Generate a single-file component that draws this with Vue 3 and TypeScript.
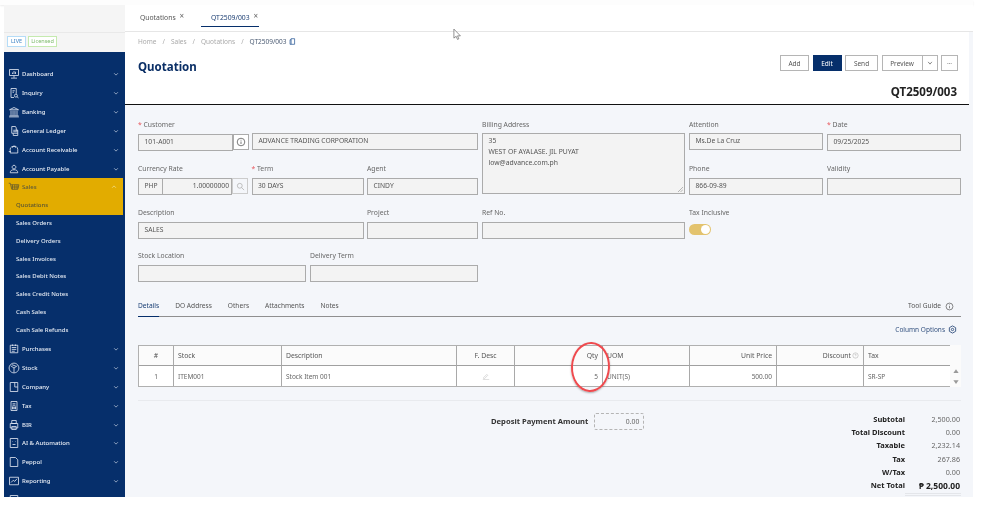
<script setup lang="ts">
interface NavItem { label: string; paths: string[] }
const navTop: NavItem[] = [
  { label: 'Dashboard', paths: ['M2 2h12v8H2z', 'M8 10v3M4 13.500h8', 'M6 8V6M8 8V4M10 8V5'] },
  { label: 'Inquiry', paths: ['M4 2h7v7M4 2v12h4', 'M6 5h3M6 7h2', 'M10.5 11.5m-2 0a2 2 0 1 0 4 0a2 2 0 1 0-4 0', 'M12 13l2 1.5'] },
  { label: 'Banking', paths: ['M2 5l6-3 6 3z', 'M4 6v6M6.700 6v6M9.300 6v6M12 6v6', 'M2 13h12M1.500 14.500h13'] },
  { label: 'General Ledger', paths: ['M5 2h5l1 2v3h2v7H7v-3H5z', 'M7 7h6M7 9h6M7 11h6'] },
  { label: 'Account Receivable', paths: ['M3 9a5 5 0 0 1 10-2v5H3z', 'M1 10h3M6 5a2 2 0 1 1 4 0'] },
  { label: 'Account Payable', paths: ['M8 3a2.5 2.5 0 1 1-.01 0z', 'M3 13c0-3 2-4 5-4s5 1 5 4z'] }
]
const navBottom: NavItem[] = [
  { label: 'Purchases', paths: ['M3 3h10v10H3z', 'M5 6h6M5 8.500h6M5 11h4', 'M6 2v2M10 2v2'] },
  { label: 'Stock', paths: ['M8 1.500a6.500 6.500 0 1 1-.01 0z', 'M3.500 5l4.500 3 4.500-3M8 8v6', 'M5 3.500l5.500 2'] },
  { label: 'Company', paths: ['M3 2h10v12H3z', 'M9 2v6h4'] },
  { label: 'Tax', paths: ['M4 2h8v12H4z', 'M6 5h4M6 7h4', 'M6 9h1v3H6zM9 9h1v3H9z'] },
  { label: 'BIR', paths: ['M5 2h6v4H5z', 'M3 6h10v6H3z', 'M5 10h6v4H5z'] },
  { label: 'AI & Automation', paths: ['M3 2h10v12H3z', 'M6 6h.5M9.500 6h.5', 'M6 10h4'] },
  { label: 'Peppol', paths: ['M3 2h7l3 3v9H3z'] },
  { label: 'Reporting', paths: ['M2 3h12v10H2z', 'M4 10l3-3 2 1.500 3-3.500'] }
]
const salesSub: string[] = ['Sales Orders', 'Delivery Orders', 'Sales Invoices', 'Sales Debit Notes', 'Sales Credit Notes', 'Cash Sales', 'Cash Sale Refunds']
const crumbs: string[] = ['Home', 'Sales', 'Quotations']
const detailTabs: string[] = ['Details', 'DO Address', 'Others', 'Attachments', 'Notes']
const totals: { label: string; value: string; strong?: boolean }[] = [
  { label: 'Subtotal', value: '2,500.00' },
  { label: 'Total Discount', value: '0.00' },
  { label: 'Taxable', value: '2,232.14' },
  { label: 'Tax', value: '267.86' },
  { label: 'W/Tax', value: '0.00' },
  { label: 'Net Total', value: '₱ 2,500.00', strong: true }
]
</script>

<template>
  <div class="screen">
    <div class="top-band"></div>
    <div class="frame">
      <aside class="sidebar">
        <div class="brand">
          <div class="badges">
            <span class="badge live">LIVE</span>
            <span class="badge licensed">Licensed</span>
          </div>
        </div>
        <nav class="nav">
          <div v-for="n in navTop" :key="n.label" class="nav-row">
            <svg class="nav-icon" viewBox="0 0 16 16"><path v-for="p in n.paths" :key="p" :d="p" /></svg>
            <span class="nav-label">{{ n.label }}</span>
            <svg class="chev" viewBox="0 0 8 8"><path d="M1.500 3l2.500 2.500L6.500 3" /></svg>
          </div>
          <div class="sales-open">
            <div class="nav-row active">
              <svg class="nav-icon" viewBox="0 0 16 16"><path d="M1 3h2l2 8h8l1.500-6H4M6 5v6M9 5v6M12 5v6M4.500 8h9.500" /></svg>
              <span class="nav-label">Sales</span>
              <svg class="chev" viewBox="0 0 8 8"><path d="M1.500 5l2.500-2.500L6.500 5" /></svg>
            </div>
            <div class="sub-row current">Quotations</div>
          </div>
          <div v-for="s in salesSub" :key="s" class="sub-row">{{ s }}</div>
          <div v-for="n in navBottom" :key="n.label" class="nav-row">
            <svg class="nav-icon" viewBox="0 0 16 16"><path v-for="p in n.paths" :key="p" :d="p" /></svg>
            <span class="nav-label">{{ n.label }}</span>
            <svg class="chev" viewBox="0 0 8 8"><path d="M1.500 3l2.500 2.500L6.500 3" /></svg>
          </div>
          <div class="nav-row">
            <svg class="nav-icon" viewBox="0 0 16 16"><path d="M3 2h10v12H3z" /></svg>
          </div>
        </nav>
      </aside>

      <main class="main">
        <div class="tabbar">
          <div class="tab first">Quotations <span class="x">×</span></div>
          <div class="tab on">QT2509/003 <span class="x">×</span></div>
        </div>
        <header class="head">
          <div class="crumbs">
            <template v-for="c in crumbs" :key="c"><span>{{ c }}</span><i>/</i></template>
            <b>QT2509/003</b>
            <svg class="copy" viewBox="0 0 10 10"><path d="M3 1h5v8H3zM3 2.500H1.500V9H3" /></svg>
          </div>
          <div class="title-row">
            <h1>Quotation</h1>
            <div class="actions">
              <button class="btn w-add">Add</button>
              <button class="btn primary w-edit">Edit</button>
              <button class="btn w-send">Send</button>
              <div class="split">
                <button class="btn w-prev">Preview</button>
                <button class="btn w-drop">
                  <svg viewBox="0 0 8 8"><path d="M1.500 2.500l2.500 3 2.500-3" /></svg>
                </button>
              </div>
              <button class="btn w-more">···</button>
            </div>
          </div>
          <div class="doc-no">QT2509/003</div>
        </header>

        <section class="body">
          <div class="form">
            <div class="col-left">
              <div class="f">
                <label><em>*</em> Customer</label>
                <div class="cust">
                  <div class="inp c-code">101-A001</div>
                  <div class="icon-btn">
                    <svg viewBox="0 0 10 10"><circle cx="5" cy="5" r="3.800" /><path d="M5 4.500v2.500M5 2.800v.8" /></svg>
                  </div>
                  <div class="inp grow raised">ADVANCE TRADING CORPORATION</div>
                </div>
              </div>
              <div class="trio">
                <div class="f">
                  <label>Currency Rate</label>
                  <div class="cur">
                    <div class="inp cur-code">PHP</div>
                    <div class="inp grow right">1.00000000</div>
                    <div class="search">
                      <svg viewBox="0 0 10 10"><circle cx="4.200" cy="4.200" r="2.700" /><path d="M6.200 6.200L9 9" /></svg>
                    </div>
                  </div>
                </div>
                <div class="f"><label><em>*</em> Term</label><div class="inp">30 DAYS</div></div>
                <div class="f"><label>Agent</label><div class="inp">CINDY</div></div>
              </div>
              <div class="duo-a">
                <div class="f"><label>Description</label><div class="inp">SALES</div></div>
                <div class="f"><label>Project</label><div class="inp"></div></div>
              </div>
              <div class="duo-b">
                <div class="f"><label>Stock Location</label><div class="inp"></div></div>
                <div class="f"><label>Delivery Term</label><div class="inp"></div></div>
              </div>
            </div>
            <div class="col-mid">
              <div class="f">
                <label>Billing Address</label>
                <div class="inp area">
                  <div>35</div>
                  <div>WEST OF AYALASE. JIL PUYAT</div>
                  <div>low@advance.com.ph</div>
                  <svg class="grip" viewBox="0 0 6 6"><path d="M0 6l6-6M3 6l3-3" /></svg>
                </div>
              </div>
              <div class="f"><label>Ref No.</label><div class="inp"></div></div>
            </div>
            <div class="col-right">
              <div class="pair">
                <div class="f"><label>Attention</label><div class="inp raised">Ms.De La Cruz</div></div>
                <div class="f"><label><em>*</em> Date</label><div class="inp">09/25/2025</div></div>
              </div>
              <div class="pair">
                <div class="f"><label>Phone</label><div class="inp">866-09-89</div></div>
                <div class="f"><label>Validity</label><div class="inp"></div></div>
              </div>
              <div class="f">
                <label>Tax Inclusive</label>
                <div class="switch"><span class="knob"></span></div>
              </div>
            </div>
          </div>

          <div class="tabs2">
            <span v-for="(t, i) in detailTabs" :key="t" class="t2" :class="{ on: i === 0 }">{{ t }}</span>
            <span class="guide">
              Tool Guide
              <svg viewBox="0 0 10 10"><circle cx="5" cy="5" r="3.800" /><path d="M5 4.500v2.500M5 2.800v.8" /></svg>
            </span>
          </div>
          <div class="col-opts">
            Column Options
            <svg viewBox="0 0 10 10"><path d="M5 1l3.500 2v4L5 9 1.500 7V3z" /><circle cx="5" cy="5" r="1.300" /></svg>
          </div>

          <div class="table-wrap">
            <div class="grid-t">
              <div class="th ctr">#</div>
              <div class="th">Stock</div>
              <div class="th">Description</div>
              <div class="th ctr">F. Desc</div>
              <div class="th rgt">Qty</div>
              <div class="th">UOM</div>
              <div class="th rgt">Unit Price</div>
              <div class="th rgt">Discount<svg class="q" viewBox="0 0 10 10"><circle cx="5" cy="5" r="3.800" /><path d="M4 4a1 1 0 1 1 1.500 1L5 5.800M5 7v.4" /></svg></div>
              <div class="th last">Tax</div>
              <div class="td ctr">1</div>
              <div class="td">ITEM001</div>
              <div class="td">Stock Item 001</div>
              <div class="td ctr">
                <svg class="pen" viewBox="0 0 10 10"><path d="M2 7l4-4 1.200 1.200-4 4H2zM1 9.500h8" /></svg>
              </div>
              <div class="td rgt">5</div>
              <div class="td">UNIT(S)</div>
              <div class="td rgt">500.00</div>
              <div class="td"></div>
              <div class="td last">SR-SP</div>
            </div>
            <div class="scroller">
              <svg viewBox="0 0 8 8"><path d="M4 1.500L7.500 6.500h-7z" /></svg>
              <svg viewBox="0 0 8 8"><path d="M4 6.500L.5 1.500h7z" /></svg>
            </div>
            <div class="ring"></div>
          </div>

          <div class="foot">
            <div class="deposit">
              <span>Deposit Payment Amount</span>
              <div class="dep-box">0.00</div>
            </div>
            <div class="totals">
              <div v-for="r in totals" :key="r.label" class="tot" :class="{ strong: r.strong }">
                <b>{{ r.label }}</b><span>{{ r.value }}</span>
              </div>
              <div class="tot-rule"></div>
            </div>
          </div>
        </section>
        <svg class="cursor" viewBox="0 0 10 14"><path d="M1 1v10l2.500-2 1.500 3.500 1.500-.7L5 8.500h3.200z" /></svg>
      </main>
    </div>
  </div>
</template>

<style>
html, body { margin: 0; background: #fff; }
</style>

<style scoped>
* { box-sizing: border-box; }
.screen {
  width: 981px; height: 519px; overflow: hidden; background: #fff;
  font-family: "Noto Sans", "Open Sans", sans-serif; font-size: 7px; color: #555;
  display: flex; flex-direction: column;
  filter: blur(.3px);
}
.top-band { height: 5px; flex: none; background: #fdfdfd; box-shadow: 0 1px 2px rgba(0,0,0,.08); margin-right: 8px; }
.frame { height: 492px; display: flex; padding-left: 4px; padding-right: 8px; flex: none; }

.sidebar { width: 121px; flex: none; display: flex; flex-direction: column; overflow: hidden; }
.brand { height: 47px; flex: none; background: #f5f5f5; padding-top: 31px; position: relative; }
.brand::before { content: ""; position: absolute; left: 0; right: 0; top: 27px; height: 1px; background: #e9e9e9; }
.badges { display: flex; gap: 2px; padding-left: 3px; }
.badge { font-size: 5.500px; height: 11px; line-height: 9px; text-align: center; border: 1px solid; background: #fff; }
.live { width: 19px; color: #3b82c4; border-color: #b5dcf7; }
.licensed { width: 29px; color: #7cb96a; border-color: #c5eaaf; }
.nav { flex: 1; background: #062f6b; padding-top: 13px; color: #e9eef6; overflow: hidden; }
.nav-row { height: 18.850px; display: flex; align-items: center; padding-left: 3.500px; padding-right: 4px; font-size: 6px; font-weight: 500; }
.nav-icon { width: 12px; height: 12px; flex: none; margin-right: 2.500px; fill: none; stroke: #dfe6f0; stroke-width: 1.100; }
.nav-label { flex: 1; white-space: nowrap; }
.chev { width: 6px; height: 6px; fill: none; stroke: #b8c6da; stroke-width: 1; margin-right: 2px; margin-left: auto; }
.sales-open { width: 119px; background: #e2ac00; }
.sales-open .nav-row { color: #5e5a3a; }
.sales-open .nav-icon { stroke: #6b5f2a; }
.sales-open .chev { stroke: #f2dd90; }
.sub-row { height: 17.850px; line-height: 17.850px; padding-left: 12px; font-size: 6px; font-weight: 500; color: #e4eaf3; white-space: nowrap; }
.sub-row.current { color: #5b5530; height: 18px; }

.main { flex: 1; min-width: 0; display: flex; flex-direction: column; position: relative; background: #f4f6fa; }
.tabbar { height: 27px; flex: none; background: #fff; border-bottom: 1px solid #e6e6e6; display: flex; padding-left: 13px; gap: 18px; }
.tab { font-size: 6.800px; color: #555; padding: 6px 0 0 2px; height: 22px; white-space: nowrap; }
.tab.first { width: 45px; }
.tab.on { width: 58px; color: #1d3f73; border-bottom: 1px solid #062f6b; padding-left: 10px; }
.x { font-size: 8px; margin-left: 2px; position: relative; top: -1px; color: #666; }

.head { height: 73px; flex: none; background: #fff; border-bottom: 1px solid #111; padding: 0 11px 0 13px; margin-right: 4px; position: relative; }
.crumbs { padding-top: 4px; height: 14px; display: flex; align-items: center; font-size: 6.500px; color: #aaa; white-space: nowrap; }
.crumbs i { font-style: normal; margin: 0 6px; }
.crumbs b { font-weight: 400; color: #4a5a72; }
.copy { width: 7px; height: 7px; margin-left: 2px; fill: none; stroke: #1d4f91; stroke-width: 1; }
.title-row { display: flex; justify-content: space-between; align-items: flex-start; padding-top: 9px; }
h1 { margin: 0; font-size: 11.500px; line-height: 16px; font-weight: 700; color: #0b2f66; position: relative; top: 4px; }
.actions { display: flex; gap: 3.500px; }
.btn { height: 16px; padding: 0; background: #fff; border: 1px solid #b5b5b5; font: inherit; font-size: 6.500px; color: #555; display: flex; align-items: center; justify-content: center; }
.btn.primary { background: #062f6b; color: #fff; border-color: #062f6b; }
.btn svg { width: 6px; height: 6px; fill: none; stroke: #666; }
.w-add, .w-edit { width: 29px; }
.w-send { width: 33px; }
.split { display: flex; }
.w-prev { width: 41px; }
.w-drop { width: 16px; margin-left: -1px; }
.w-more { width: 17px; color: #888; }
.doc-no { position: absolute; right: 12px; top: 53px; font-size: 11.500px; line-height: 14px; font-weight: 700; color: #222; }

.body { flex: 1; min-height: 0; background: #f4f6fa; padding: 14px 12px 0 13px; position: relative; }
.form { display: flex; gap: 4px; height: 177px; }
.f { display: flex; flex-direction: column; min-width: 0; }
label { height: 15px; font-size: 6.800px; line-height: 12px; color: #666; white-space: nowrap; }
label em { color: #e8545a; font-style: normal; }
.inp { height: 17px; background: #f3f3f3; border: 1px solid #ababab; font-size: 6.700px; line-height: 14px; padding: 0 5.500px; color: #555; white-space: nowrap; overflow: hidden; }
.raised { position: relative; top: -1px; }
.col-left { width: 340px; flex: none; display: flex; flex-direction: column; gap: 12px; }
.cust, .cur { display: flex; }
.c-code { width: 95px; flex: none; }
.icon-btn { width: 16px; height: 16px; flex: none; border: 1px solid #ababab; background: #fff; display: flex; align-items: center; justify-content: center; margin-right: 3px; }
.icon-btn svg { width: 10px; height: 10px; fill: none; stroke: #444; stroke-width: .7; }
.grow { flex: 1; min-width: 0; }
.right { text-align: right; padding-right: 2px; border-left: 0; }
.cur-code { width: 25px; flex: none; }
.search { width: 16px; height: 16px; flex: none; border: 1px solid #ccc; display: flex; align-items: center; justify-content: center; }
.search svg { width: 9px; height: 9px; fill: none; stroke: #aaa; stroke-width: .8; }
.trio { display: grid; grid-template-columns: 110px 112px 111px; column-gap: 3.500px; }
.duo-a { display: grid; grid-template-columns: 226px 111px; column-gap: 3px; }
.duo-b { display: grid; grid-template-columns: 168px 168px; column-gap: 4px; margin-top: -1px; }
.col-mid { width: 203px; flex: none; display: flex; flex-direction: column; gap: 12px; }
.area { height: 61px; margin-top: -1px; padding: 1px 5.500px 0; line-height: 11px; position: relative; white-space: normal; font-size: 6.800px; }
.col-mid .f + .f { margin-top: 1px; }
.grip { position: absolute; right: 1px; bottom: 1px; width: 5px; height: 5px; stroke: #777; stroke-width: .6; fill: none; }
.col-right { width: 272px; flex: none; display: flex; flex-direction: column; gap: 12px; }
.pair { display: grid; grid-template-columns: 134px 134px; column-gap: 4px; }
.switch { width: 22px; height: 11px; margin-top: 2px; border-radius: 6px; background: #e3c36e; position: relative; }
.knob { position: absolute; right: 1px; top: 1px; width: 9px; height: 9px; border-radius: 50%; background: #fff; }

.tabs2 { display: flex; height: 18px; border-bottom: 1px solid #8f8f8f; position: relative; margin-top: 3px; gap: 16px; font-size: 6.600px; color: #555; }
.t2 { padding-top: 2px; height: 18px; white-space: nowrap; }
.t2.on { color: #163c72; border-bottom: 1px solid #062f6b; }
.guide { margin-left: auto; display: flex; align-items: flex-start; gap: 4px; padding-top: 2px; padding-right: 7px; }
.guide svg, .col-opts svg { width: 9px; height: 9px; fill: none; stroke: #444; stroke-width: .7; margin-top: 1px; }
.col-opts { height: 28px; display: flex; justify-content: flex-end; gap: 3px; padding: 8px 4px 0 0; font-size: 6.500px; color: #33517f; }
.col-opts svg { stroke: #33517f; stroke-width: 1; margin-top: 0; }

.table-wrap { display: flex; position: relative; }
.grid-t { width: 812px; flex: none; display: grid; grid-template-columns: 35px 108px 175px 58px 88px 87px 87px 87px 87px; border: solid #b0b0b0; border-width: 1px 0 1px 1px; }
.th, .td { border-right: 1px solid #a9a9a9; padding: 0 4px; white-space: nowrap; display: flex; align-items: center; overflow: hidden; }
.th { height: 20px; background: #fbfbfb; border-bottom: 1px solid #a0a0a0; font-size: 6.800px; color: #555; }
.td { height: 20px; background: #fff; font-size: 6.500px; color: #666; }
.ctr { justify-content: center; }
.rgt { justify-content: flex-end; }
.q { width: 7px; height: 7px; fill: none; stroke: #999; stroke-width: .6; margin-left: 1px; }
.pen { width: 8px; height: 8px; fill: none; stroke: #c8c8c8; stroke-width: .8; }
.scroller { width: 11px; display: flex; flex-direction: column; justify-content: flex-end; align-items: center; gap: 5px; padding-bottom: 2px; background: #fbfbfb; }
.scroller svg { width: 6px; height: 6px; fill: #9a9a9a; }
.ring { position: absolute; left: 433px; top: -3px; width: 39px; height: 50px; border: 2px solid #ef4a4e; border-radius: 50%; box-shadow: 0 1px 2px rgba(0,0,0,.3); pointer-events: none; transform: rotate(3deg); }

.foot { margin-top: 13px; border-top: 1px solid #e8eaee; display: flex; justify-content: space-between; position: relative; padding-top: 12px; }
.deposit { display: flex; align-items: flex-start; gap: 6px; margin-left: 353px; font-size: 7.600px; font-weight: 700; color: #333; }
.deposit span { line-height: 16px; }
.dep-box { width: 50px; height: 17px; border: 1px dashed #b5b5b5; border-radius: 2px; font-weight: 400; font-size: 6.800px; color: #666; text-align: right; line-height: 15px; padding-right: 4px; }
.totals { width: 210px; }
.tot { display: flex; height: 13.200px; align-items: center; justify-content: flex-end; font-size: 7.500px; line-height: 13px; }
.tot b { color: #222; font-weight: 700; }
.tot span { width: 56px; text-align: right; color: #666; padding-right: 1px; font-size: 7.200px; }
.tot.strong span { color: #222; font-weight: 700; font-size: 8.500px; white-space: nowrap; }
.tot-rule { width: 56px; height: 3px; margin: 1px 0 0 auto; border: solid #e4e6ea; border-width: 1px 0; }

.cursor { position: absolute; left: 328px; top: 23px; width: 9px; height: 13px; fill: #fff; stroke: #555; stroke-width: .7; }
</style>
